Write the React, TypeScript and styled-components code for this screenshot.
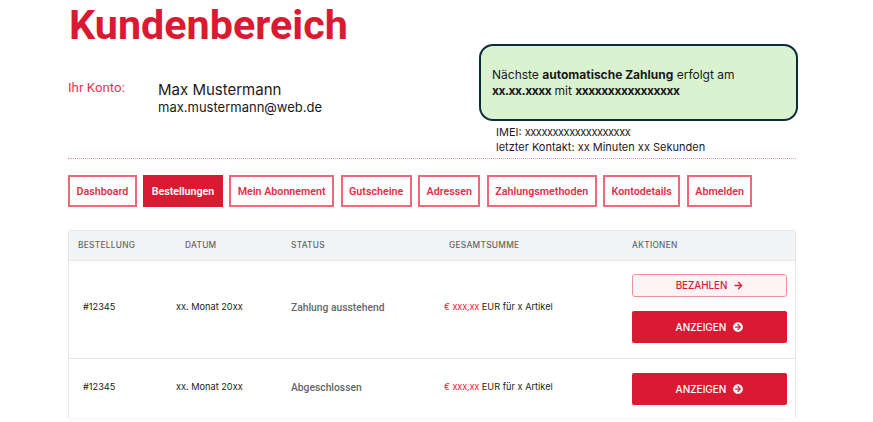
import { createGlobalStyle, styled } from "styled-components";
import { FaArrowCircleRight, FaArrowRight } from "react-icons/fa";

const GlobalStyle = createGlobalStyle`
  html, body {
    margin: 0;
    padding: 0;
    height: 422px;
    overflow: hidden;
    background: #fff;
  }
  * {
    box-sizing: border-box;
  }
`;

const red = "#da1a32";

const Page = styled.div`
  width: 728px;
  margin-left: 68px;
  font-family: Inter, "Liberation Sans", sans-serif;
  color: #1a1a1a;
`;

const Header = styled.header`
  display: flex;
  justify-content: space-between;
  height: 159px;
  border-bottom: 1px dotted #f28fa0;
`;

const Title = styled.h1`
  margin: 0;
  padding: 1px 0 0 1px;
  font-family: Roboto, "Liberation Sans", sans-serif;
  font-size: 41.3px;
  line-height: 48px;
  font-weight: 700;
  color: ${red};
`;

const Account = styled.div`
  display: flex;
  margin-top: 31px;
`;

const AccountLabel = styled.span`
  width: 90px;
  font-family: Roboto, "Liberation Sans", sans-serif;
  font-size: 13.3px;
  line-height: 16px;
  color: #e2374d;
`;

const AccountName = styled.div`
  font-size: 15px;
  line-height: 19px;
`;

const AccountMail = styled.div`
  font-size: 13px;
  line-height: 17px;
`;

const Side = styled.div`
  width: 319px;
  margin-right: -2px;
  padding-top: 44px;
`;

const Notice = styled.div`
  display: flex;
  flex-direction: column;
  justify-content: center;
  height: 77px;
  padding: 1px 0 0 11px;
  background: #d9f2d0;
  border: 2px solid #0e2b3c;
  border-radius: 14px;
  font-size: 12px;
  line-height: 16px;
`;

const Masked = styled.span`
  letter-spacing: -0.45px;
`;

const Device = styled.div`
  padding: 4px 0 0 17px;
  font-size: 11px;
  line-height: 14.5px;
`;

const Nav = styled.nav`
  display: flex;
  gap: 6.4px;
  margin-top: 16px;
`;

const NavItem = styled.a<{ $active?: boolean }>`
  display: flex;
  align-items: center;
  height: 32px;
  padding: 0 6.5px;
  border: 2px solid ${({ $active }) => ($active ? red : "#ec6a7c")};
  background: ${({ $active }) => ($active ? red : "#fff")};
  color: ${({ $active }) => ($active ? "#fff" : "#e2304a")};
  font-family: Roboto, "Liberation Sans", sans-serif;
  font-size: 10.7px;
  font-weight: 600;
  white-space: nowrap;
`;

const Table = styled.div`
  margin-top: 23px;
  border: 1px solid #e6e7ea;
  border-bottom: 0;
  border-radius: 3px 3px 0 0;
`;

const TableEdge = styled.div`
  width: 767px;
  height: 2px;
  background: linear-gradient(to right, #fafafa 92%, #fff);
`;

const columns = "98px 115px 153px 188px 1fr";

const HeadRow = styled.div`
  display: grid;
  grid-template-columns: ${columns};
  align-items: center;
  height: 30px;
  padding: 0 0 1px 9px;
  background: #f3f4f6;
  border-bottom: 1px solid #e6e7ea;
`;

const HeadCell = styled.span<{ $inset?: number }>`
  padding-left: ${({ $inset }) => $inset ?? 0}px;
  font-size: 8.3px;
  font-weight: 500;
  letter-spacing: 0.3px;
  color: #666;
`;

const Row = styled.div<{ $height: number; $line?: boolean; $tail?: number }>`
  display: grid;
  grid-template-columns: ${columns};
  align-items: center;
  height: ${({ $height }) => $height}px;
  padding: 0 0 ${({ $tail }) => $tail ?? 0}px 9px;
  border-bottom: ${({ $line }) => ($line ? "1px solid #e6e7ea" : "0")};
`;

const Cell = styled.span<{ $inset?: number }>`
  padding: 0 0 4px ${({ $inset }) => $inset ?? 0}px;
  font-size: 9.2px;
  color: #222;
  white-space: nowrap;
`;

const StatusCell = styled.span`
  padding-bottom: 2px;
  font-family: Roboto, "Liberation Sans", sans-serif;
  font-size: 10.3px;
  font-weight: 500;
  color: #666;
`;

const Price = styled.span`
  letter-spacing: -0.15px;
  color: #f0202f;
`;

const Actions = styled.div`
  display: flex;
  flex-direction: column;
  gap: 14px;
  width: 155px;
`;

const PayButton = styled.button`
  display: flex;
  align-items: center;
  justify-content: center;
  gap: 7px;
  width: 100%;
  height: 23px;
  padding: 0;
  background: #fff3f6;
  border: 1px solid #f0919f;
  border-radius: 3px;
  color: ${red};
  font-family: Inter, "Liberation Sans", sans-serif;
  font-size: 9.8px;
  font-weight: 500;
`;

const ViewButton = styled.button`
  display: flex;
  align-items: center;
  justify-content: center;
  gap: 7px;
  width: 100%;
  height: 32px;
  padding: 0;
  background: ${red};
  border: 0;
  border-radius: 2px;
  color: #fff;
  font-family: Inter, "Liberation Sans", sans-serif;
  font-size: 10px;
  font-weight: 500;
`;

const navItems = [
  "Dashboard",
  "Bestellungen",
  "Mein Abonnement",
  "Gutscheine",
  "Adressen",
  "Zahlungsmethoden",
  "Kontodetails",
  "Abmelden",
];

const orders = [
  { status: "Zahlung ausstehend", height: 98, tail: 2, pay: true },
  { status: "Abgeschlossen", height: 59, tail: 0, pay: false },
];

export default function App() {
  return (
    <Page>
      <GlobalStyle />
      <Header>
        <div>
          <Title>Kundenbereich</Title>
          <Account>
            <AccountLabel>Ihr Konto:</AccountLabel>
            <div>
              <AccountName>Max Mustermann</AccountName>
              <AccountMail>max.mustermann@web.de</AccountMail>
            </div>
          </Account>
        </div>
        <Side>
          <Notice>
            <div>
              Nächste <b>automatische Zahlung</b> erfolgt am
            </div>
            <div>
              <b>
                <Masked>xx.xx.xxxx</Masked>
              </b>{" "}
              mit{" "}
              <b>
                <Masked>xxxxxxxxxxxxxxxx</Masked>
              </b>
            </div>
          </Notice>
          <Device>
            <div>
              IMEI: <Masked>xxxxxxxxxxxxxxxxxxx</Masked>
            </div>
            <div>letzter Kontakt: xx Minuten xx Sekunden</div>
          </Device>
        </Side>
      </Header>

      <Nav>
        {navItems.map((item) => (
          <NavItem key={item} $active={item === "Bestellungen"}>
            {item}
          </NavItem>
        ))}
      </Nav>

      <Table>
        <HeadRow>
          <HeadCell>BESTELLUNG</HeadCell>
          <HeadCell $inset={9}>DATUM</HeadCell>
          <HeadCell>STATUS</HeadCell>
          <HeadCell $inset={5}>GESAMTSUMME</HeadCell>
          <HeadCell>AKTIONEN</HeadCell>
        </HeadRow>
        {orders.map((order, index) => (
          <Row
            key={order.status}
            $height={order.height}
            $tail={order.tail}
            $line={index === 0}
          >
            <Cell $inset={5}>#12345</Cell>
            <Cell>xx. Monat 20xx</Cell>
            <StatusCell>{order.status}</StatusCell>
            <Cell>
              <Price>€ xxx,xx</Price> EUR für x Artikel
            </Cell>
            <Actions>
              {order.pay && (
                <PayButton>
                  BEZAHLEN <FaArrowRight size={9} />
                </PayButton>
              )}
              <ViewButton>
                ANZEIGEN <FaArrowCircleRight size={10} />
              </ViewButton>
            </Actions>
          </Row>
        ))}
      </Table>
      <TableEdge />
    </Page>
  );
}
